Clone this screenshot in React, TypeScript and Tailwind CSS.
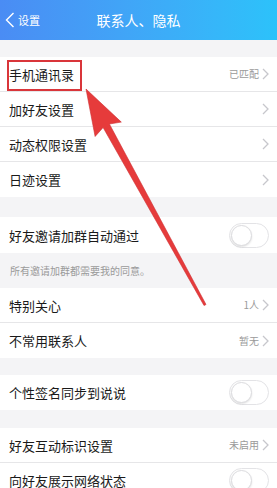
import React from "react";

const font = { fontFamily: '"Noto Sans CJK SC", "Noto Sans", sans-serif' };

function Chevron() {
  return (
    <svg width="7" height="12" viewBox="0 0 7 12" className="ml-[3px] shrink-0">
      <path d="M1 1 L6 6 L1 11" fill="none" stroke="#c7c7cc" strokeWidth="1.3" />
    </svg>
  );
}

function Toggle() {
  return (
    <div className="w-[40px] h-[25px] rounded-full border border-[#e3e3e6] bg-white relative shrink-0">
      <div className="absolute left-[1px] top-[1px] w-[21px] h-[21px] rounded-full bg-white border border-[#dcdcdf] shadow-[0_1px_2px_rgba(0,0,0,0.12)]" />
    </div>
  );
}

function Row({
  label,
  value,
  chevron,
  toggle,
  last,
  h = "h-[35px]",
}: {
  label: string;
  value?: string;
  chevron?: boolean;
  toggle?: boolean;
  last?: boolean;
  h?: string;
}) {
  return (
    <div className={`flex items-center bg-white pl-[9px] pr-[8px] ${h} ${last ? "" : "border-b border-[#e6e6e8]"}`}>
      <span className="text-[13px] text-[#1a1a1a] flex-1 leading-none">{label}</span>
      {value && <span className="text-[10px] text-[#9a9a9a] leading-none">{value}</span>}
      {chevron && <Chevron />}
      {toggle && <Toggle />}
    </div>
  );
}

export default function App() {
  // arrow geometry
  const tip = [86, 89];
  const tail = [205, 305];
  const dx = tail[0] - tip[0];
  const dy = tail[1] - tip[1];
  const len = Math.hypot(dx, dy);
  const ux = dx / len;
  const uy = dy / len;
  const px = uy;
  const py = -ux;
  const headLen = 46;
  const headHalf = 15;
  const bx = tip[0] + ux * headLen;
  const by = tip[1] + uy * headLen;
  const sw0 = 3.6;
  const sw1 = 1.1;
  const pts = [
    [tip[0], tip[1]],
    [bx + px * headHalf, by + py * headHalf],
    [bx + px * sw0 - ux * 4, by + py * sw0 - uy * 4],
    [tail[0] + px * sw1, tail[1] + py * sw1],
    [tail[0] - px * sw1, tail[1] - py * sw1],
    [bx - px * sw0 - ux * 4, by - py * sw0 - uy * 4],
    [bx - px * headHalf, by - py * headHalf],
  ]
    .map((p) => `${p[0].toFixed(1)},${p[1].toFixed(1)}`)
    .join(" ");

  return (
    <div className="relative w-[277px] h-[488px] overflow-hidden bg-[#f4f4f6]" style={font}>
      {/* Header */}
      <div className="h-[40px] bg-gradient-to-r from-[#4a8cf4] to-[#2cc2fa] flex items-center relative">
        <div className="flex items-center pl-[5px] text-white">
          <svg width="10" height="16" viewBox="0 0 10 16">
            <path d="M8.5 1 L1.5 8 L8.5 15" fill="none" stroke="white" strokeWidth="1.4" />
          </svg>
          <span className="text-[11px] ml-[3px] leading-none">设置</span>
        </div>
        <div className="absolute inset-0 flex items-center justify-center pointer-events-none">
          <span className="text-white text-[14px] leading-none">联系人、隐私</span>
        </div>
      </div>

      <div className="h-[17px]" />
      <Row label="手机通讯录" value="已匹配" chevron />
      <Row label="加好友设置" chevron />
      <Row label="动态权限设置" chevron />
      <Row label="日迹设置" chevron last />

      <div className="h-[20px]" />
      <Row label="好友邀请加群自动通过" toggle last h="h-[36px]" />
      <div className="h-[35px] flex items-center pl-[10px]">
        <span className="text-[10px] text-[#9a9a9a] leading-none">所有邀请加群都需要我的同意。</span>
      </div>
      <Row label="特别关心" value="1人" chevron />
      <Row label="不常用联系人" value="暂无" chevron last />

      <div className="h-[17px]" />
      <Row label="个性签名同步到说说" toggle last />

      <div className="h-[18px]" />
      <Row label="好友互动标识设置" value="未启用" chevron />
      <Row label="向好友展示网络状态" toggle last />

      {/* red highlight box */}
      <div className="absolute left-[7px] top-[60px] w-[75px] h-[31px] border-2 border-[#d9353a]" />

      {/* red arrow */}
      <svg className="absolute left-0 top-0 pointer-events-none" width="277" height="488" viewBox="0 0 277 488">
        <polygon points={pts} fill="#e63b3b" stroke="#cf2f32" strokeWidth="0.6" strokeLinejoin="round" />
      </svg>
    </div>
  );
}
